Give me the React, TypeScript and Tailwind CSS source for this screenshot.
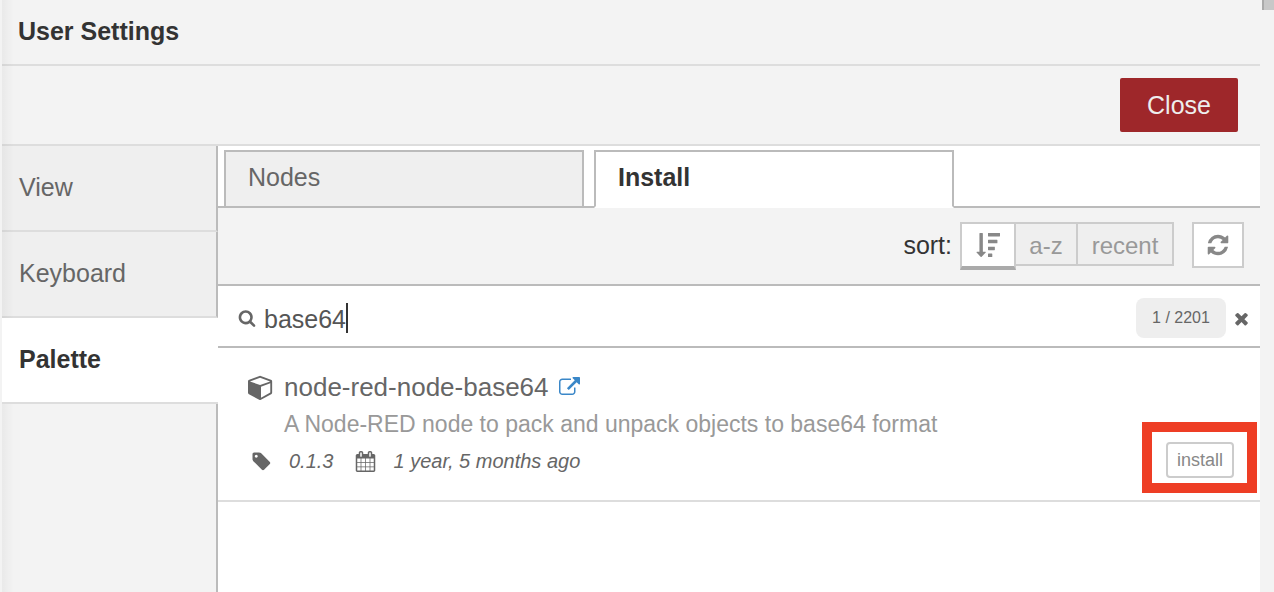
import React from "react";

type IconProps = { d: string; className: string };

function Icon({ d, className }: IconProps) {
  return (
    <svg viewBox="0 0 1792 1792" fill="currentColor" aria-hidden="true" className={"shrink-0 " + className}>
      <path d={d} />
    </svg>
  );
}

const icons = {
  search:
    "M1216 832q0-185-131.5-316.5t-316.5-131.5-316.5 131.5-131.5 316.5 131.5 316.5 316.5 131.5 316.5-131.5 131.5-316.5zm512 832q0 52-38 90t-90 38q-54 0-90-38l-343-342q-179 124-399 124-143 0-273.5-55.5t-225-150-150-225-55.5-273.5 55.5-273.5 150-225 225-150 273.5-55.5 273.5 55.5 225 150 150 225 55.5 273.5q0 220-124 399l343 343q37 37 37 90z",
  times:
    "M1490 1322q0 40-28 68l-136 136q-28 28-68 28t-68-28l-294-294-294 294q-28 28-68 28t-68-28l-136-136q-28-28-28-68t28-68l294-294-294-294q-28-28-28-68t28-68l136-136q28-28 68-28t68 28l294 294 294-294q28-28 68-28t68 28l136 136q28 28 28 68t-28 68l-294 294 294 294q28 28 28 68z",
  refresh:
    "M1639 1056q0 5-1 7-64 268-268 434.5t-478 166.5q-146 0-282.5-55t-243.5-157l-129 129q-19 19-45 19t-45-19-19-45v-448q0-26 19-45t45-19h448q26 0 45 19t19 45-19 45l-137 137q71 66 161 102t187 36q134 0 250-65t186-179q11-17 53-117 8-23 30-23h192q13 0 22.5 9.5t9.5 22.5zm25-800v448q0 26-19 45t-45 19h-448q-26 0-45-19t-19-45 19-45l138-138q-148-137-349-137-134 0-250 65t-186 179q-11 17-53 117-8 23-30 23h-199q-13 0-22.5-9.5t-9.5-22.5v-7q65-268 270-434.5t480-166.5q146 0 284 55.5t245 156.5l130-129q19-19 45-19t45 19 19 45z",
  tag: "M576 448q0-53-37.5-90.5t-90.5-37.5-90.5 37.5-37.5 90.5 37.5 90.5 90.5 37.5 90.5-37.5 37.5-90.5zm1067 576q0 53-37 90l-491 492q-39 37-91 37-53 0-90-37l-715-716q-38-37-64.5-101t-26.5-117v-416q0-52 38-90t90-38h416q53 0 117 26.5t102 64.5l715 714q37 39 37 91z",
  calendar:
    "M192 1664h288v-288h-288v288zm352 0h320v-288h-320v288zm-352-352h288v-320h-288v320zm352 0h320v-320h-320v320zm-352-384h288v-288h-288v288zm736 736h320v-288h-320v288zm-384-736h320v-288h-320v288zm768 736h288v-288h-288v288zm-384-352h320v-320h-320v320zm-352-864v-288q0-13-9.5-22.5t-22.5-9.5h-64q-13 0-22.5 9.5t-9.5 22.5v288q0 13 9.5 22.5t22.5 9.5h64q13 0 22.5-9.5t9.5-22.5zm736 864h288v-320h-288v320zm-384-384h320v-288h-320v288zm384 0h288v-288h-288v288zm32-480v-288q0-13-9.5-22.5t-22.5-9.5h-64q-13 0-22.5 9.5t-9.5 22.5v288q0 13 9.5 22.5t22.5 9.5h64q13 0 22.5-9.5t9.5-22.5zm384-64v1280q0 52-38 90t-90 38h-1408q-52 0-90-38t-38-90v-1280q0-52 38-90t90-38h128v-96q0-66 47-113t113-47h64q66 0 113 47t47 113v96h384v-96q0-66 47-113t113-47h64q66 0 113 47t47 113v96h128q52 0 90 38t38 90z",
  cube: "M896 1629l640-349v-636l-640 233v752zm-64-865l698-254-698-254-698 254zm832-252v768q0 35-18 65t-49 47l-704 384q-28 16-61 16t-61-16l-704-384q-31-17-49-47t-18-65v-768q0-40 23-73t61-47l704-256q22-8 44-8t44 8l704 256q38 14 61 47t23 73z",
  external:
    "M1408 928v320q0 119-84.5 203.5t-203.5 84.5h-832q-119 0-203.5-84.5t-84.5-203.5v-832q0-119 84.5-203.5t203.5-84.5h704q14 0 23 9t9 23v64q0 14-9 23t-23 9h-704q-66 0-113 47t-47 113v832q0 66 47 113t113 47h832q66 0 113-47t47-113v-320q0-14 9-23t23-9h64q14 0 23 9t9 23zm384-864v512q0 26-19 45t-45 19-45-19l-176-176-652 652q-10 10-23 10t-23-10l-114-114q-10-10-10-23t10-23l652-652-176-176q-19-19-19-45t19-45 45-19h512q26 0 45 19t19 45z",
  sortAmount:
    "M1216 1568v192q0 14-9 23t-23 9h-256q-14 0-23-9t-9-23v-192q0-14 9-23t23-9h256q14 0 23 9t9 23zm-480-128q0 12-10 24l-319 320q-10 9-23 9-12 0-23-9l-320-320q-15-16-7-35 8-20 30-20h192v-1376q0-14 9-23t23-9h192q14 0 23 9t9 23v1376h192q14 0 23 9t9 23zm672-384v192q0 14-9 23t-23 9h-448q-14 0-23-9t-9-23v-192q0-14 9-23t23-9h448q14 0 23 9t9 23zm192-512v192q0 14-9 23t-23 9h-640q-14 0-23-9t-9-23v-192q0-14 9-23t23-9h640q14 0 23 9t9 23zm192-512v192q0 14-9 23t-23 9h-832q-14 0-23-9t-9-23v-192q0-14 9-23t23-9h832q14 0 23 9t9 23z",
};

function Sidebar() {
  return (
    <nav aria-label="Settings sections" className="flex w-[216px] shrink-0 flex-col text-[25px] leading-8 text-[#666]">
      {["View", "Keyboard"].map((name) => (
        <button
          key={name}
          type="button"
          className="h-[86px] border-r-2 border-b-2 border-r-[#bbb] border-b-[#ddd] bg-[#efefef] px-[17px] pb-0.5 text-left"
        >
          {name}
        </button>
      ))}
      <button
        type="button"
        aria-current="page"
        className="z-10 h-[86px] border-b-2 border-[#ddd] bg-white px-[17px] pb-0.5 text-left font-bold text-[#333]"
      >
        Palette
      </button>
      <div className="flex-1 border-r-2 border-[#bbb]" />
    </nav>
  );
}

function Tabs() {
  return (
    <div role="tablist" className="flex h-[62px] gap-[10px] border-b-2 border-[#bbb] bg-white px-1.5 pt-1 text-[25px] leading-8">
      <button
        type="button"
        role="tab"
        aria-selected="false"
        className="-mb-0.5 w-[360px] border-2 border-[#bbb] bg-[#efefef] px-[22px] pb-1 text-left text-[#666]"
      >
        Nodes
      </button>
      <button
        type="button"
        role="tab"
        aria-selected="true"
        className="-mb-0.5 w-[360px] border-2 border-[#bbb] border-b-white bg-white px-[22px] pb-1 text-left font-bold text-[#333]"
      >
        Install
      </button>
    </div>
  );
}

function SortBar() {
  return (
    <div className="flex h-[78px] items-start justify-end border-b-2 border-[#bbb] px-4 pt-3.5 text-2xl leading-8 text-[#999]">
      <span className="mr-2 flex h-[46px] items-center text-[25px] text-[#333]">sort:</span>
      <div role="group" aria-label="Sort order" className="mr-[18px] flex items-start">
        <button
          type="button"
          aria-label="relevance"
          aria-pressed="true"
          className="flex h-12 w-14 items-center justify-center border-2 border-b-4 border-[#ccc] border-b-[#aaa] bg-white text-[#888]"
        >
          <Icon d={icons.sortAmount} className="size-6" />
        </button>
        <button type="button" className="h-11 w-[62px] border-y-2 border-r-2 border-[#ccc] bg-[#efefef] pt-1">
          a-z
        </button>
        <button type="button" className="h-11 w-24 border-y-2 border-r-2 border-[#ccc] bg-[#efefef] pt-1">
          recent
        </button>
      </div>
      <button
        type="button"
        aria-label="Refresh"
        className="flex h-[46px] w-[52px] items-center justify-center border-2 border-[#ccc] bg-white text-[#888]"
      >
        <Icon d={icons.refresh} className="size-6" />
      </button>
    </div>
  );
}

function SearchBar() {
  return (
    <div className="flex h-[62px] items-center border-b-2 border-[#bbb] bg-white pt-1 pr-[9px] pl-5 text-[#666]">
      <label htmlFor="search" aria-label="Search modules" className="mr-2">
        <Icon d={icons.search} className="size-[18px]" />
      </label>
      <input
        id="search"
        type="text"
        defaultValue="base64"
        className="field-sizing-content bg-transparent pt-0.5 text-[25px] leading-8 text-[#555] outline-none"
      />
      <span className="h-[30px] w-0.5 bg-[#333]" />
      <span className="mr-1.5 ml-auto flex h-10 w-[90px] items-center justify-center rounded-lg bg-[#eee] text-base">
        1 / 2201
      </span>
      <button type="button" aria-label="Clear search">
        <Icon d={icons.times} className="size-[19px]" />
      </button>
    </div>
  );
}

function ModuleItem() {
  return (
    <article className="flex items-end justify-between border-b-2 border-[#ddd] py-[21px] pr-[26px] pl-[30px] text-[#666]">
      <div className="flex flex-col gap-px">
        <h2 className="flex h-9 items-center text-[26px]">
          <Icon d={icons.cube} className="mr-2.5 size-[26px]" />
          node-red-node-base64
          <a href="#node-red-node-base64" aria-label="Open module page" className="ml-2.5 text-[#3a87c8]">
            <Icon d={icons.external} className="size-[21px]" />
          </a>
        </h2>
        <p className="flex h-9 items-center pl-9 text-[23px] text-[#999]">
          A Node-RED node to pack and unpack objects to base64 format
        </p>
        <div className="flex h-9 items-center text-xl italic">
          <Icon d={icons.tag} className="mr-[17px] ml-[3px] size-[21px]" />
          0.1.3
          <Icon d={icons.calendar} className="mr-[17px] ml-[22px] size-[21px]" />
          1 year, 5 months ago
        </div>
      </div>
      <div className="relative mb-px">
        <button
          type="button"
          className="flex h-9 w-[68px] items-center justify-center rounded-[4px] border-2 border-[#ccc] bg-white text-lg text-[#888]"
        >
          install
        </button>
        <span className="pointer-events-none absolute -top-5 -right-[23px] -bottom-[15px] -left-6 border-10 border-[#ee3e25]" />
      </div>
    </article>
  );
}

export default function App() {
  return (
    <div className="flex min-h-screen bg-[#f3f3f3] pl-0.5 font-['Liberation_Sans',Arial,sans-serif]">
      <main className="relative flex min-w-0 flex-1 flex-col">
        <header className="flex h-[66px] items-center border-b-2 border-[#ddd] px-4 pb-0.5">
          <h1 className="text-[25px] leading-8 font-bold text-[#333]">User Settings</h1>
        </header>
        <div className="flex h-20 items-center justify-end border-b-2 border-[#ddd] px-[22px]">
          <button type="button" className="h-[54px] w-[118px] rounded-[2px] bg-[#9e272a] text-[25px] leading-8 text-[#eee]">
            Close
          </button>
        </div>
        <div className="flex flex-1">
          <Sidebar />
          <section className="flex min-w-0 flex-1 flex-col">
            <Tabs />
            <SortBar />
            <div className="flex-1 bg-white">
              <SearchBar />
              <ModuleItem />
            </div>
          </section>
        </div>
        <div className="pointer-events-none absolute inset-y-0 left-0 w-3 bg-linear-to-r from-black/4 to-transparent" />
      </main>
      <div className="flex w-3.5 shrink-0 justify-end">
        <div className="h-2.5 w-3 border-l-2 border-[#aaa] bg-[#c8c8c8]" />
      </div>
    </div>
  );
}
